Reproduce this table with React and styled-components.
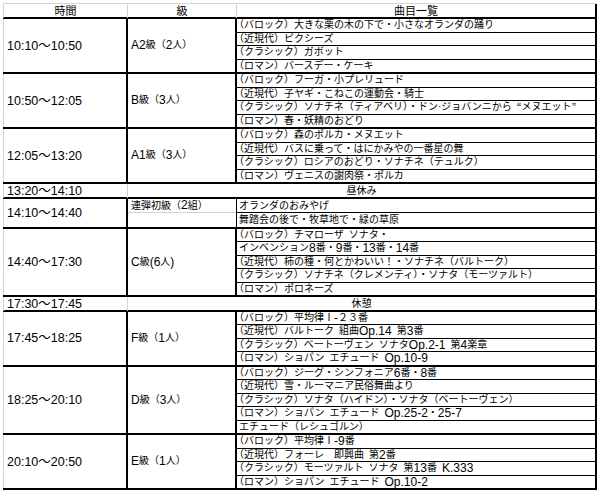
import React from "react";
import styled, { createGlobalStyle } from "styled-components";

const GRAY = "#d4d4d4";
const INK = "#000";

const GlobalStyle = createGlobalStyle`
  html, body { margin: 0; padding: 0; background: #fff; }
  body {
    font-family: "Liberation Sans", "Noto Sans CJK JP", sans-serif;
    color: ${INK};
  }
`;

const Sheet = styled.div`
  margin: 3px 0 0 3px;
  width: 594px;
  font-family: "Liberation Sans", "Noto Sans CJK JP", sans-serif;
  color: ${INK};
  text-spacing-trim: trim-start;
`;

const HeaderRow = styled.div`
  display: grid;
  grid-template-columns: 125px 109px 360px;
  border-top: 1px solid ${GRAY};
  border-bottom: 2px solid ${INK};
  height: 16px;
  box-sizing: border-box;
`;

const HeaderCell = styled.div`
  box-sizing: border-box;
  display: flex;
  align-items: center;
  justify-content: center;
  font-size: 11px;
  line-height: 13px;
  padding-top: 1px;
  border-left: ${(p) => (p.$first ? `1px solid ${GRAY}` : "none")};
  border-right: ${(p) => (p.$last ? `2px solid ${INK}` : `1px solid ${GRAY}`)};
`;

const Group = styled.div`
  display: grid;
  grid-template-columns: 125px 109px 360px;
  border-bottom: 2px solid ${INK};
`;

const TimeCell = styled.div`
  box-sizing: border-box;
  display: flex;
  align-items: center;
  padding-left: 3px;
  padding-top: 1px;
  font-size: 12.5px;
  line-height: 13px;
  white-space: nowrap;
  border-left: 1px solid ${GRAY};
  border-right: ${(p) => (p.$soft ? `1px solid ${GRAY}` : `2px solid ${INK}`)};
`;

const ClassCell = styled.div`
  box-sizing: border-box;
  display: flex;
  flex-direction: column;
  justify-content: ${(p) => (p.$stack ? "flex-start" : "center")};
  font-size: 10px;
  white-space: nowrap;
  border-right: ${(p) => (p.$thin ? `1px solid ${INK}` : `2px solid ${INK}`)};
`;

const ClassLine = styled.div`
  box-sizing: content-box;
  display: flex;
  align-items: center;
  padding-left: 3px;
  height: ${(p) => p.$h}px;
  line-height: ${(p) => p.$h}px;
  border-top: ${(p) => (p.$sep ? `1px solid ${GRAY}` : "none")};
`;

const SongList = styled.div`
  box-sizing: border-box;
  display: flex;
  flex-direction: column;
  border-right: 2px solid ${INK};
`;

const SongRow = styled.div`
  box-sizing: content-box;
  display: flex;
  align-items: center;
  height: ${(p) => p.$h}px;
  line-height: ${(p) => p.$h}px;
  padding-left: 2px;
  font-size: 10px;
  white-space: pre;
  overflow: hidden;
  & + & {
    border-top: 1px solid ${INK};
  }
`;

const BreakRow = styled.div`
  display: grid;
  grid-template-columns: 125px 469px;
  height: 12.5px;
  box-sizing: content-box;
  border-bottom: 2px solid ${INK};
`;

const BreakLabel = styled.div`
  box-sizing: border-box;
  display: flex;
  align-items: center;
  justify-content: center;
  font-size: 10px;
  line-height: 12.5px;
  padding-top: 1px;
  border-right: 2px solid ${INK};
`;

const Latin = styled.span`
  font-family: "Liberation Sans", sans-serif;
  font-size: 12px;
`;

const Quote = styled.span`
  font-family: "Noto Sans CJK JP", sans-serif;
`;

const Gap = styled.span`
  display: inline-block;
  width: 5px;
`;

function Mixed({ text }) {
  const parts = text.split(/([A-Za-z0-9.:\-()]+|[“”]| )/);
  return parts.map((p, i) => {
    if (!(i % 2)) return p;
    if (p === " ") return <Gap key={i} />;
    if (p === "“" || p === "”") return <Quote key={i}>{p}</Quote>;
    return <Latin key={i}>{p}</Latin>;
  });
}

const ROW = 12.5;

const schedule = [
  {
    time: "10:10～10:50",
    cls: ["A2級（2人）"],
    songs: [
      "（バロック）大きな栗の木の下で・小さなオランダの踊り",
      "（近現代）ピクシーズ",
      "（クラシック）ガボット",
      "（ロマン）バースデー・ケーキ",
    ],
  },
  {
    time: "10:50～12:05",
    cls: ["B級（3人）"],
    songs: [
      "（バロック）フーガ・小プレリュード",
      "（近現代）子ヤギ・こねこの運動会・騎士",
      "（クラシック）ソナチネ（ティアベリ）・ドン·ジョバンニから “メヌエット”",
      "（ロマン）春・妖精のおどり",
    ],
  },
  {
    time: "12:05～13:20",
    cls: ["A1級（3人）"],
    songs: [
      "（バロック）森のポルカ・メヌエット",
      "（近現代）バスに乗って・はにかみやの一番星の舞",
      "（クラシック）ロシアのおどり・ソナチネ（テュルク）",
      "（ロマン）ヴェニスの謝肉祭・ポルカ",
    ],
  },
  { brk: true, time: "13:20～14:10", label: "昼休み" },
  {
    time: "14:10～14:40",
    cls: ["連弾初級（2組）", ""],
    stack: true,
    rowH: 13.5,
    songs: ["オランダのおみやげ", "舞踏会の後で・牧草地で・緑の草原"],
  },
  {
    time: "14:40～17:30",
    cls: ["C級(6人)"],
    songs: [
      "（バロック）チマローザ ソナタ・",
      "インベンション8番・9番・13番・14番",
      "（近現代）柿の種・何とかわいい！・ソナチネ（バルトーク）",
      "（クラシック）ソナチネ（クレメンティ）・ソナタ（モーツァルト）",
      "（ロマン）ポロネーズ",
    ],
  },
  { brk: true, time: "17:30～17:45", label: "休憩" },
  {
    time: "17:45～18:25",
    cls: ["F級（1人）"],
    songs: [
      "（バロック）平均律Ⅰ-２３番",
      "（近現代）バルトーク 組曲Op.14 第3番",
      "（クラシック）ベートーヴェン ソナタOp.2-1 第4楽章",
      "（ロマン）ショパン エチュード Op.10-9",
    ],
  },
  {
    time: "18:25～20:10",
    cls: ["D級（3人）"],
    songs: [
      "（バロック）ジーグ・シンフォニア6番・8番",
      "（近現代）雪・ルーマニア民俗舞曲より",
      "（クラシック）ソナタ（ハイドン）・ソナタ（ベートーヴェン）",
      "（ロマン）ショパン エチュード Op.25-2・25-7",
      "エチュード（レシュゴルン）",
    ],
  },
  {
    time: "20:10～20:50",
    cls: ["E級（1人）"],
    songs: [
      "（バロック）平均律Ⅰ-9番",
      "（近現代）フォーレ　即興曲 第2番",
      "（クラシック）モーツァルト ソナタ 第13番 K.333",
      "（ロマン）ショパン エチュード Op.10-2",
    ],
  },
];

export default function App() {
  return (
    <>
      <GlobalStyle />
      <Sheet>
        <HeaderRow>
          <HeaderCell $first>時間</HeaderCell>
          <HeaderCell>級</HeaderCell>
          <HeaderCell $last>曲目一覧</HeaderCell>
        </HeaderRow>
        {schedule.map((g, gi) =>
          g.brk ? (
            <BreakRow key={gi}>
              <TimeCell $soft>{g.time}</TimeCell>
              <BreakLabel>{g.label}</BreakLabel>
            </BreakRow>
          ) : (
            <Group key={gi}>
              <TimeCell>{g.time}</TimeCell>
              <ClassCell $stack={g.stack} $thin={g.stack}>
                {g.cls.map((c, ci) => (
                  <ClassLine
                    key={ci}
                    $h={g.stack ? g.rowH : 12.5}
                    $sep={ci > 0}
                  >
                    <Mixed text={c} />
                  </ClassLine>
                ))}
              </ClassCell>
              <SongList>
                {g.songs.map((s, si) => (
                  <SongRow key={si} $h={g.rowH || ROW}>
                    <Mixed text={s} />
                  </SongRow>
                ))}
              </SongList>
            </Group>
          )
        )}
      </Sheet>
    </>
  );
}
